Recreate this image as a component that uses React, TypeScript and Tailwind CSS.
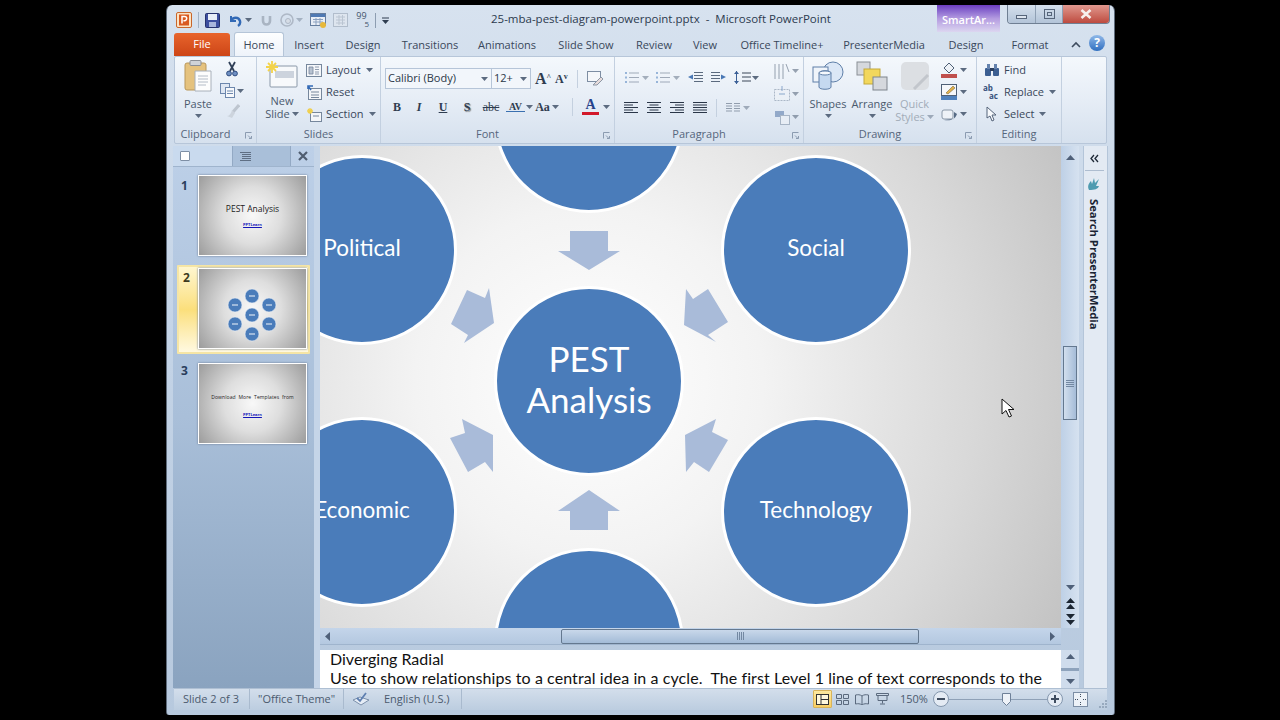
import type { ReactNode } from "react";

const uiFont = "font-['Open_Sans','Noto_Sans',sans-serif]";

const tabs = [
  { label: "Insert", w: "w-[50px]" },
  { label: "Design", w: "w-[58px]" },
  { label: "Transitions", w: "w-[76px]" },
  { label: "Animations", w: "w-[78px]" },
  { label: "Slide Show", w: "w-[80px]" },
  { label: "Review", w: "w-[56px]" },
  { label: "View", w: "w-[46px]" },
  { label: "Office Timeline+", w: "w-[108px]" },
  { label: "PresenterMedia", w: "w-[96px]" },
  { label: "Design", w: "w-[68px]" },
  { label: "Format", w: "w-[60px]" },
];

function Caret({ className = "" }: { className?: string }) {
  return (
    <svg width="7" height="4" viewBox="0 0 7 4" className={"shrink-0 " + className}>
      <path d="M0 0h7L3.5 4z" fill="#5c6b80" />
    </svg>
  );
}

function QuickAccess() {
  return (
    <div className="flex items-center h-full pl-[9px] pt-[3px] gap-[6px]">
      <svg width="16" height="16" viewBox="0 0 16 16">
        <rect x="0.5" y="0.5" width="15" height="15" rx="1.5" fill="#fbe3c4" stroke="#c9662a" />
        <rect x="3" y="2.5" width="10" height="11" fill="#d9591f" />
        <path d="M6 11.5v-7h2.6a2 2 0 0 1 0 4.2H7.4" stroke="#fff" strokeWidth="1.5" fill="none" />
      </svg>
      <div className="w-px h-[16px] bg-[#a3b3c6]" />
      <svg width="15" height="15" viewBox="0 0 15 15">
        <rect x="0.5" y="0.5" width="14" height="14" rx="1" fill="#3d4f9f" stroke="#27336e" />
        <rect x="3" y="1" width="9" height="6" fill="#e8eef8" />
        <rect x="4" y="9" width="7" height="5" fill="#a9b6dc" />
      </svg>
      <svg width="14" height="13" viewBox="0 0 14 13" className="ml-[2px]">
        <path d="M3 2v5h5" fill="none" stroke="#3269b5" strokeWidth="2" />
        <path d="M3.5 6.5C5 3 10.5 2.5 12 7c.5 2-.5 4-2 5" fill="none" stroke="#3269b5" strokeWidth="2.4" />
      </svg>
      <Caret className="-ml-[3px]" />
      <svg width="13" height="13" viewBox="0 0 13 13" className="ml-[2px]">
        <path d="M3 2v5a3.5 3.5 0 0 0 7 0V2" fill="none" stroke="#a9b4c2" strokeWidth="2.6" />
      </svg>
      <svg width="16" height="16" viewBox="0 0 16 16">
        <circle cx="8" cy="8" r="6" fill="none" stroke="#aeb8c6" strokeWidth="1.6" />
        <circle cx="9" cy="9" r="2.5" fill="#d6dde6" stroke="#aeb8c6" />
      </svg>
      <Caret className="-ml-[5px] opacity-40" />
      <svg width="16" height="15" viewBox="0 0 16 15" className="ml-[1px]">
        <rect x="0.5" y="0.5" width="15" height="12" fill="#e9eef6" stroke="#667e9f" />
        <rect x="1" y="1" width="14" height="3" fill="#4f79b3" />
        <path d="M3 6.5h10M3 9h10M6 5v7M10 5v7" stroke="#8ba1bf" />
        <circle cx="13" cy="12" r="3" fill="#e7b83a" />
      </svg>
      <svg width="15" height="14" viewBox="0 0 15 14" className="ml-[1px] opacity-60">
        <rect x="0.5" y="0.5" width="14" height="13" fill="#e3e8ef" stroke="#9aa6b5" />
        <path d="M3 4h9M3 7h9M3 10h9M6 2v10M9.500 2v10" stroke="#a9b3c0" />
      </svg>
      <div className="flex flex-col items-center leading-[8px] text-[9px] text-[#43546b] w-[15px]">
        <span>99</span>
        <span className="self-end text-[8px]">5</span>
      </div>
      <div className="w-px h-[15px] bg-[#8d9db1]" />
      <svg width="7" height="7" viewBox="0 0 7 7">
        <path d="M0 0.500h7v1H0zM0 3h7L3.500 7z" fill="#2f3d50" />
      </svg>
    </div>
  );
}

function WindowButtons() {
  return (
    <div className="flex h-[19px] self-start rounded-b-[4px] border border-t-0 border-[#6f7f93] overflow-hidden w-[103px] shrink-0 mr-[6px]">
      <div className="w-[28px] flex items-center justify-center bg-gradient-to-b from-[#d5e0ed] to-[#b3c4d8] border-r border-[#8fa0b4]">
        <div className="w-[11px] h-[4px] mt-[5px] bg-[#dde5ef] border border-[#56657a]" />
      </div>
      <div className="w-[27px] flex items-center justify-center bg-gradient-to-b from-[#d5e0ed] to-[#b3c4d8] border-r border-[#8fa0b4]">
        <div className="w-[11px] h-[10px] border border-[#56657a] flex items-center justify-center">
          <div className="w-[5px] h-[4px] border border-[#56657a]" />
        </div>
      </div>
      <div className="flex-1 flex items-center justify-center bg-gradient-to-b from-[#e0988f] to-[#bd4a3f]">
        <svg width="12" height="10" viewBox="0 0 12 10">
          <path d="M1.500 1l9 8M10.500 1l-9 8" stroke="#f6f1ef" strokeWidth="2.600" />
        </svg>
      </div>
    </div>
  );
}

function TitleBar() {
  return (
    <div className="flex h-[27px] shrink-0">
      <div className="w-[318px] shrink-0">
        <QuickAccess />
      </div>
      <div className="w-[452px] shrink-0 pt-[6px] pl-[6px] text-[11.5px] leading-[16px] text-[#2c3a4e] whitespace-nowrap">
        25-mba-pest-diagram-powerpoint.pptx&nbsp; -&nbsp; Microsoft PowerPoint
      </div>
      <div className="w-[63px] shrink-0 bg-gradient-to-b from-[#6d3cc0] via-[#b49be0] to-[#dcd6f0] pt-[7px] text-center text-[11px] leading-[16px] font-semibold text-white">
        SmartAr...
      </div>
      <div className="w-[7px] shrink-0" />
      <WindowButtons />
    </div>
  );
}

function TabRow() {
  return (
    <div className="flex h-[24px] shrink-0 items-stretch text-[11px] text-[#39475a] pl-[7px]">
      <div className="w-[56px] mt-[1px] rounded-t-[3px] bg-gradient-to-b from-[#e8642c] to-[#cd4516] text-white flex items-center justify-center">
        File
      </div>
      <div className="w-[50px] ml-[4px] pt-[1px] rounded-t-[3px] bg-gradient-to-b from-[#fdfeff] to-[#eef3fa] border border-b-0 border-[#b5c5d8] flex items-center justify-center">
        Home
      </div>
      {tabs.map((t, i) => (
        <div key={i} className={t.w + " pt-[2px] flex items-center justify-center whitespace-nowrap"}>
          {t.label}
        </div>
      ))}
      <div className="w-[15px] flex items-center justify-end ml-[6px]">
        <svg width="10" height="7" viewBox="0 0 10 7">
          <path d="M1 6l4-4 4 4" fill="none" stroke="#3e4c5f" strokeWidth="1.600" />
        </svg>
      </div>
      <div className="ml-[8px] mt-[3px] w-[16px] h-[16px] rounded-full bg-gradient-to-b from-[#8fb8e8] to-[#2f6fc0] text-white text-[12px] leading-[16px] font-bold text-center">
        ?
      </div>
    </div>
  );
}

function Group({ label, w, launcher, children }: { label: string; w: string; launcher?: boolean; children: ReactNode }) {
  return (
    <div className={w + " shrink-0 flex flex-col border-r border-[#c3d0e0] relative"}>
      <div className="h-[69px] flex">{children}</div>
      <div className={"h-[15px] text-center text-[11px] leading-[15px] text-[#56667c] " + (launcher ? "pr-[20px]" : "")}>{label}</div>
      {launcher && (
        <svg width="7" height="7" viewBox="0 0 7 7" className="absolute right-[4px] bottom-[4px]">
          <path d="M0.500 6.500v-6h6M3 3.500l3 3M4 6.500h2.500V4" fill="none" stroke="#8b9bb0" />
        </svg>
      )}
    </div>
  );
}

function SmallRow({ icon, label, caret }: { icon: ReactNode; label: string; caret?: boolean }) {
  return (
    <div className="h-[22px] flex items-center text-[11px] text-[#39475a] gap-[3px] whitespace-nowrap">
      <span className="w-[17px] h-[16px] flex items-center justify-center shrink-0">{icon}</span>
      <span className="ml-[1px]">{label}</span>
      {caret && <Caret className="ml-[2px]" />}
    </div>
  );
}

function Clipboard() {
  return (
    <div className="flex pl-[6px] pt-[3px]">
      <div className="w-[34px] flex flex-col items-center text-[11px] leading-[13px] text-[#4b5a6e]">
        <svg width="28" height="32" viewBox="0 0 28 32">
          <rect x="1" y="3" width="21" height="27" rx="2" fill="#e5c27e" stroke="#b9975a" />
          <rect x="6" y="0.500" width="11" height="5" rx="1" fill="#cfd3d8" stroke="#8a8f96" />
          <path d="M11 11h16v20H11z" fill="#fdfdfd" stroke="#a8b0ba" />
          <path d="M14 16h10M14 19h10M14 22h10M14 25h8" stroke="#b4bcc7" />
        </svg>
        <span className="mt-[5px]">Paste</span>
        <Caret className="mt-[4px]" />
      </div>
      <div className="ml-[6px] flex flex-col items-center pt-[1px] gap-[6px] w-[22px]">
        <svg width="14" height="16" viewBox="0 0 14 16">
          <path d="M4 1l5 9M10 1L5 10" stroke="#2f3f57" strokeWidth="1.800" />
          <circle cx="4" cy="12.500" r="2.400" fill="#6e8fc2" stroke="#2f4c80" />
          <circle cx="10" cy="12.500" r="2.400" fill="#6e8fc2" stroke="#2f4c80" />
        </svg>
        <div className="flex items-center gap-[2px]">
          <svg width="15" height="15" viewBox="0 0 15 15">
            <rect x="0.500" y="0.500" width="9" height="10" fill="#dfe7f3" stroke="#6d87ad" />
            <rect x="5.500" y="4.500" width="9" height="10" fill="#f7f9fc" stroke="#6d87ad" />
            <path d="M7 8h6M7 10.500h6" stroke="#6d87ad" />
          </svg>
          <Caret />
        </div>
        <svg width="15" height="15" viewBox="0 0 15 15" className="opacity-70">
          <path d="M14 1L8 8" stroke="#aeb6c0" strokeWidth="3" />
          <path d="M7 6l3 3-3 5-5-2c2 0 4-2 5-6z" fill="#c5ccd5" />
        </svg>
      </div>
    </div>
  );
}

function Slides() {
  return (
    <div className="flex pt-[3px]">
      <div className="w-[50px] flex flex-col items-center text-[11px] leading-[13px] text-[#4b5a6e]">
        <svg width="32" height="28" viewBox="0 0 32 28">
          <rect x="4" y="6" width="27" height="21" rx="1" fill="#f7f9fb" stroke="#8a98a8" />
          <rect x="9" y="11" width="19" height="7" fill="#ccd3dd" />
          <path d="M6 1v12M0 7h12M2 3l8 8M10 3l-8 8" stroke="#f3d34a" strokeWidth="1.800" />
        </svg>
        <span className="mt-[6px]">New</span>
        <span className="flex items-center gap-[2px]">
          Slide <Caret />
        </span>
      </div>
      <div className="-ml-[2px] flex flex-col -mt-[1px]">
        <SmallRow
          label="Layout"
          caret
          icon={
            <svg width="16" height="13" viewBox="0 0 16 13">
              <rect x="0.500" y="0.500" width="15" height="12" fill="#f4f6f9" stroke="#76879c" />
              <path d="M3 3h4v7H3zM9 3h4M9 5.500h4M9 8h4M9 10h4" fill="#b7c2d0" stroke="#76879c" strokeWidth="0.800" />
            </svg>
          }
        />
        <SmallRow
          label="Reset"
          icon={
            <svg width="16" height="15" viewBox="0 0 16 15">
              <rect x="2.500" y="3.500" width="13" height="11" fill="#f4f6f9" stroke="#76879c" />
              <path d="M5 7h8M5 10h8M5 12.500h8" stroke="#76879c" />
              <path d="M7 1H2v3M2 1l3 4" fill="none" stroke="#3269b5" strokeWidth="1.600" />
            </svg>
          }
        />
        <SmallRow
          label="Section"
          caret
          icon={
            <svg width="16" height="15" viewBox="0 0 16 15">
              <rect x="4.500" y="5.500" width="11" height="9" fill="#f4f6f9" stroke="#76879c" />
              <path d="M7 9h6" stroke="#76879c" />
              <path d="M4 1v6M1 4h6M2 2l4 4M6 2L2 6" stroke="#f0cf4c" strokeWidth="1.300" />
            </svg>
          }
        />
      </div>
    </div>
  );
}

function FontGroup() {
  return (
    <div className="flex flex-col pl-[4px] pt-[11px] w-full">
      <div className="flex items-center h-[21px]">
        <div className="w-[107px] h-[21px] bg-[#f2f6fb] border border-[#b6c5d8] flex items-center justify-between pl-[2px] pr-[3px] text-[11px] text-[#2b3848]">
          <span>Calibri (Body)</span>
          <Caret />
        </div>
        <div className="w-[39px] h-[21px] bg-[#f2f6fb] border border-l-0 border-[#b6c5d8] flex items-center justify-between pl-[2px] pr-[3px] text-[11px] text-[#2b3848]">
          <span>12+</span>
          <Caret />
        </div>
        <span className="ml-[4px] w-[20px] font-['Liberation_Serif',serif] font-bold text-[16px] text-[#2f3d50]">
          A<sup className="text-[8px]">^</sup>
        </span>
        <span className="w-[20px] font-['Liberation_Serif',serif] font-bold text-[12px] text-[#2f3d50]">
          A<sup className="text-[8px]">v</sup>
        </span>
        <div className="w-px h-[18px] bg-[#c4d0df] ml-[2px]" />
        <svg width="17" height="16" viewBox="0 0 17 16" className="ml-[9px]">
          <rect x="0.500" y="0.500" width="13" height="10" fill="#f5f7fa" stroke="#7e8ea3" />
          <path d="M6 14l8-8 2 2-6 6z" fill="#e7dcdc" stroke="#8d97a5" />
        </svg>
      </div>
      <div className="flex items-center h-[21px] mt-[7px] text-[#2f3d50] font-['Liberation_Serif',serif] text-[12px] font-bold">
        <span className="w-[12px] ml-[6px] text-center">B</span>
        <span className="w-[12px] ml-[10px] text-center italic">I</span>
        <span className="w-[12px] ml-[12px] text-center underline">U</span>
        <span className="w-[12px] ml-[12px] text-center [text-shadow:1px_1px_1px_#777]">S</span>
        <span className="w-[18px] ml-[9px] text-center line-through font-normal">abc</span>
        <span className="w-[19px] ml-[6px] text-center text-[10px] leading-[9px] border-b border-[#3a70b0]">AV</span>
        <Caret className="ml-[1px]" />
        <span className="w-[17px] ml-[1px] text-center">Aa</span>
        <Caret className="ml-[1px]" />
        <div className="w-px h-[18px] bg-[#c4d0df] ml-[13px]" />
        <span className="w-[17px] ml-[9px] text-center text-[14px] leading-[14px] text-[#26428b] border-b-[3px] border-[#d2182a]">A</span>
        <Caret className="ml-[4px]" />
      </div>
    </div>
  );
}

function ListIcon({ muted }: { muted?: boolean }) {
  return (
    <svg width="15" height="13" viewBox="0 0 15 13" className={muted ? "opacity-60" : ""}>
      <path d="M5 2h10M5 6.500h10M5 11h10" stroke="#6d7b8e" />
      <path d="M1 1h2v2H1zM1 5.500h2v2H1zM1 10h2v2H1z" fill="#5f8cc4" />
    </svg>
  );
}

function IndentIcon({ flip }: { flip?: boolean }) {
  return (
    <svg width="15" height="13" viewBox="0 0 15 13" className={flip ? "-scale-x-100" : ""}>
      <path d="M6 1.500h9M6 4.500h9M6 7.500h9M6 10.500h9" stroke="#5b6a7e" />
      <path d="M5 3.500v5L0 6z" fill="#4a78b5" />
    </svg>
  );
}

function AlignIcon({ kind }: { kind: "l" | "c" | "r" | "j" }) {
  const d = {
    l: "M0 1.500h14M0 4h9M0 6.500h14M0 9h9M0 11.500h14",
    c: "M0 1.500h14M2.500 4h9M0 6.500h14M2.500 9h9M0 11.500h14",
    r: "M0 1.500h14M5 4h9M0 6.500h14M5 9h9M0 11.500h14",
    j: "M0 1.500h14M0 4h14M0 6.500h14M0 9h14M0 11.500h14",
  }[kind];
  return (
    <svg width="14" height="13" viewBox="0 0 14 13">
      <path d={d} stroke="#2a3648" />
    </svg>
  );
}

function Paragraph() {
  return (
    <div className="flex w-full pl-[9px] pt-[5px]">
      <div className="flex flex-col w-[150px] pt-[5px]">
        <div className="flex items-center h-[21px]">
          <ListIcon muted />
          <Caret className="ml-[3px] opacity-50" />
          <span className="w-[6px]" />
          <ListIcon muted />
          <Caret className="ml-[3px] opacity-50" />
          <span className="w-[8px]" />
          <IndentIcon />
          <span className="w-[8px]" />
          <IndentIcon flip />
          <span className="w-[8px]" />
          <svg width="17" height="15" viewBox="0 0 17 15">
            <path d="M2.500 1v13" stroke="#3a5f96" />
            <path d="M0 4l2.500-3L5 4zM0 11l2.500 3L5 11z" fill="#3a5f96" />
            <path d="M8 3h9M8 7h9M8 11h9" stroke="#3a4658" />
          </svg>
          <Caret className="ml-[1px]" />
        </div>
        <div className="flex items-center h-[21px] mt-[9px] gap-[9px]">
          <AlignIcon kind="l" />
          <AlignIcon kind="c" />
          <AlignIcon kind="r" />
          <AlignIcon kind="j" />
          <div className="w-px h-[18px] bg-[#c4d0df]" />
          <svg width="14" height="12" viewBox="0 0 14 12" className="opacity-60">
            <path d="M0 1.500h6M0 4h6M0 6.500h6M0 9h6M8 1.500h6M8 4h6M8 6.500h6M8 9h6" stroke="#5b6a7e" />
          </svg>
          <Caret className="-ml-[6px] opacity-50" />
        </div>
      </div>
      <div className="flex flex-col gap-[5px] opacity-60">
        <div className="flex items-center gap-[2px] h-[18px]">
          <svg width="16" height="17" viewBox="0 0 16 17">
            <path d="M1 1v15M5 1v15M9 1v15" stroke="#5b6a7e" />
            <path d="M12 1l3 8" stroke="#5b6a7e" />
          </svg>
          <Caret />
        </div>
        <div className="flex items-center gap-[2px] h-[18px]">
          <svg width="16" height="16" viewBox="0 0 16 16">
            <rect x="0.500" y="3.500" width="15" height="11" fill="#eef2f7" stroke="#8494a8" strokeDasharray="2 1" />
            <path d="M8 0v5M5 8h6" stroke="#4d78b0" />
          </svg>
          <Caret />
        </div>
        <div className="flex items-center gap-[2px] h-[18px]">
          <svg width="16" height="16" viewBox="0 0 16 16">
            <path d="M1 2h9v6H1z" fill="#5f7fae" />
            <rect x="6.500" y="6.500" width="9" height="9" fill="#eef2f7" stroke="#8494a8" />
          </svg>
          <Caret />
        </div>
      </div>
    </div>
  );
}

function Drawing() {
  return (
    <div className="flex w-full pl-[2px] pt-[4px] text-[11px] leading-[13px] text-[#4b5a6e]">
      <div className="w-[44px] flex flex-col items-center">
        <svg width="32" height="30" viewBox="0 0 32 30">
          <circle cx="21" cy="11" r="10" fill="#dbe7f6" stroke="#5f7fa8" />
          <rect x="1" y="6" width="15" height="15" fill="#eff4fa" stroke="#5f7fa8" />
          <path d="M7 12c0-3 12-3 12 0v14c0 3-12 3-12 0z" fill="#c5d9f0" stroke="#5f7fa8" />
          <ellipse cx="13" cy="12" rx="6" ry="2" fill="#f5f9fd" stroke="#5f7fa8" />
        </svg>
        <span className="mt-[6px]">Shapes</span>
        <Caret className="mt-[4px]" />
      </div>
      <div className="w-[44px] flex flex-col items-center">
        <svg width="32" height="30" viewBox="0 0 32 30">
          <rect x="1" y="1" width="13" height="13" fill="#d5d8dd" stroke="#8a8f96" />
          <rect x="8" y="8" width="16" height="15" fill="#f2d75c" stroke="#c4a93a" />
          <rect x="17" y="16" width="14" height="13" fill="#d5d8dd" stroke="#7f858d" />
        </svg>
        <span className="mt-[6px]">Arrange</span>
        <Caret className="mt-[4px]" />
      </div>
      <div className="w-[41px] flex flex-col items-center text-[#a2acb8]">
        <svg width="30" height="30" viewBox="0 0 30 30">
          <rect x="1" y="1" width="28" height="28" rx="5" fill="#dcdfe3" />
          <path d="M28 14L14 28" stroke="#c2c6cc" strokeWidth="3" />
        </svg>
        <span className="mt-[6px]">Quick</span>
        <span className="flex items-center gap-[2px]">
          Styles <Caret className="opacity-50" />
        </span>
      </div>
      <div className="ml-[6px] flex flex-col gap-[6px] pt-[1px]">
        <div className="flex items-center gap-[3px] h-[16px]">
          <svg width="16" height="16" viewBox="0 0 16 16">
            <path d="M3 6l5-5 5 5-5 5z" fill="#eef2f7" stroke="#4f6076" />
            <rect x="0" y="12" width="16" height="4" fill="#c0504d" />
          </svg>
          <Caret />
        </div>
        <div className="flex items-center gap-[3px] h-[16px]">
          <svg width="16" height="16" viewBox="0 0 16 16">
            <rect x="0.500" y="0.500" width="15" height="11" fill="#f5f7fa" stroke="#4f6076" />
            <path d="M5 9l7-7 2 2-7 6z" fill="#e0b04a" stroke="#6a5a30" strokeWidth="0.500" />
            <rect x="0" y="12" width="16" height="4" fill="#4f81bd" />
          </svg>
          <Caret />
        </div>
        <div className="flex items-center gap-[3px] h-[16px]">
          <svg width="16" height="14" viewBox="0 0 16 14">
            <rect x="1" y="3" width="11" height="9" rx="2" fill="#eef2f7" stroke="#8a98a8" />
            <path d="M3 13c6 1 11 0 13-6l-3-2v7z" fill="#566a84" />
          </svg>
          <Caret />
        </div>
      </div>
    </div>
  );
}

function Editing() {
  return (
    <div className="flex flex-col pl-[6px] pt-[2px]">
      <SmallRow
        label="Find"
        icon={
          <svg width="16" height="14" viewBox="0 0 16 14">
            <rect x="1" y="5" width="6" height="8" rx="1" fill="#3c5f92" />
            <rect x="9" y="5" width="6" height="8" rx="1" fill="#3c5f92" />
            <rect x="3" y="1" width="3" height="5" fill="#6583ae" />
            <rect x="10" y="1" width="3" height="5" fill="#6583ae" />
            <rect x="6" y="5" width="4" height="3" fill="#2b3f5f" />
          </svg>
        }
      />
      <SmallRow
        label="Replace"
        caret
        icon={
          <svg width="17" height="16" viewBox="0 0 17 16" fontSize="8" fontWeight="700" fill="#37527c">
            <text x="0" y="7">ab</text>
            <text x="6" y="15">ac</text>
          </svg>
        }
      />
      <SmallRow
        label="Select"
        caret
        icon={
          <svg width="14" height="16" viewBox="0 0 14 16">
            <path d="M2 1v11l3-2 2 5 2-1-2-5h4z" fill="#f7f9fc" stroke="#55647a" />
          </svg>
        }
      />
    </div>
  );
}

function Ribbon() {
  return (
    <div className="h-[88px] shrink-0 mx-[7px] flex bg-gradient-to-b from-[#f4f8fc] via-[#e6edf6] to-[#d6e1ee] border border-[#b7c6d9] rounded-[2px]">
      <Group label="Clipboard" w="w-[82px]" launcher>
        <Clipboard />
      </Group>
      <Group label="Slides" w="w-[124px]">
        <Slides />
      </Group>
      <Group label="Font" w="w-[234px]" launcher>
        <FontGroup />
      </Group>
      <Group label="Paragraph" w="w-[189px]" launcher>
        <Paragraph />
      </Group>
      <Group label="Drawing" w="w-[173px]" launcher>
        <Drawing />
      </Group>
      <Group label="Editing" w="w-[85px]">
        <Editing />
      </Group>
    </div>
  );
}

function Thumb({ children }: { children: ReactNode }) {
  return (
    <div className="w-[109px] h-[81px] border border-white shadow-[0_0_2px_#67788f] bg-[radial-gradient(circle_68px_at_50%_50%,#f8f8f8_0%,#dedede_42%,#999999_100%)] flex flex-col items-center justify-center shrink-0">
      {children}
    </div>
  );
}

function MiniDiagram() {
  const spots = [
    [53, 27],
    [36, 36],
    [70, 36],
    [53, 46],
    [36, 55],
    [70, 55],
    [53, 65],
  ];
  return (
    <svg width="107" height="79" viewBox="0 0 107 79">
      {spots.map(([x, y], i) => (
        <g key={i}>
          <circle cx={x} cy={y} r="7" fill="#4a7cba" stroke="#e9eef5" strokeWidth="0.600" />
          <path d={`M${x - 3} ${y}h6`} stroke="#f2f6fb" />
        </g>
      ))}
    </svg>
  );
}

function SlideLink() {
  return <span className="text-[4px] leading-[6px] text-[#1414b8] underline font-bold">PPTLearn</span>;
}

function ThumbPane() {
  return (
    <div className="w-[141px] shrink-0 flex flex-col bg-gradient-to-b from-[#bdd0e8] via-[#a9bfd9] to-[#8aa3bf]">
      <div className="flex h-[21px] shrink-0 border-b border-[#9fb4cd]">
        <div className="w-[59px] bg-[#c9daee] pl-[7px] pt-[5px]">
          <div className="w-[10px] h-[10px] rounded-[1px] bg-white border border-[#7e8fa5]" />
        </div>
        <div className="w-[59px] bg-[#a9bfd9] border-x border-[#93a9c4] flex items-center pl-[7px]">
          <svg width="11" height="9" viewBox="0 0 11 9">
            <path d="M0 .500h11M2 2.500h9M2 4.500h9M2 6.500h9M0 8.500h11" stroke="#5f6f84" />
          </svg>
        </div>
        <div className="flex-1 flex items-center justify-center">
          <svg width="10" height="10" viewBox="0 0 10 10">
            <path d="M1 1l8 8M9 1l-8 8" stroke="#4f5d70" strokeWidth="2.200" />
          </svg>
        </div>
      </div>
      <div className="flex pl-[25px] pt-[8px] relative">
        <span className="absolute left-[8px] top-[10px] text-[12px] font-bold text-[#2a3e5c]">1</span>
        <Thumb>
          <span className="text-[8.500px] leading-[12px] text-[#222]">PEST Analysis</span>
          <div className="mt-[2px] leading-[6px]">
            <SlideLink />
          </div>
        </Thumb>
      </div>
      <div className="mt-[9px] mx-[4px] h-[89px] flex items-start pt-[1px] pl-[19px] relative rounded-[1px] border-2 border-[#f5e5a5] bg-gradient-to-b from-[#fff6cf] via-[#fbdf7b] to-[#fff9e0]">
        <span className="absolute left-[4px] top-[2px] text-[12px] font-bold text-[#3d3a20]">2</span>
        <Thumb>
          <MiniDiagram />
        </Thumb>
      </div>
      <div className="flex pl-[25px] pt-[9px] relative">
        <span className="absolute left-[8px] top-[8px] text-[12px] font-bold text-[#2a3e5c]">3</span>
        <Thumb>
          <span className="text-[5px] leading-[8px] text-[#222] mt-[3px] whitespace-nowrap tracking-[0.1px]">Download&nbsp; More&nbsp; Templates&nbsp; from</span>
          <div className="mt-[6px] leading-[6px]">
            <SlideLink />
          </div>
        </Thumb>
      </div>
    </div>
  );
}

function Node({ pos, children, big }: { pos: string; children?: ReactNode; big?: boolean }) {
  return (
    <div
      className={
        pos +
        " absolute w-[190px] h-[190px] rounded-full bg-[#4a7cba] border-[3px] border-white flex items-center justify-center text-center text-white pb-[4px] font-['Lato','Noto_Sans',sans-serif] " +
        (big ? "text-[35px] leading-[41px]" : "text-[22.500px] leading-[28px]")
      }
    >
      {children}
    </div>
  );
}

function Canvas() {
  return (
    <div className="relative flex-1 overflow-hidden bg-[radial-gradient(circle_580px_at_269px_235px,#ffffff_0%,#f3f3f3_30%,#d9d9d9_66%,#bcbcbc_100%)]">
      <Node pos="left-[174px] -top-[123px]" />
      <Node pos="-left-[53px] top-[9px]">Political</Node>
      <Node pos="left-[401px] top-[9px]">Social</Node>
      <Node pos="left-[174px] top-[140px]" big>
        <span>
          PEST
          <br />
          Analysis
        </span>
      </Node>
      <Node pos="-left-[53px] top-[271px]">Economic</Node>
      <Node pos="left-[401px] top-[271px]">Technology</Node>
      <Node pos="left-[174px] top-[402px]" />
      <svg className="absolute inset-0" width="741" height="482" viewBox="320 146 741 482">
        <g fill="#a9bbd9">
          <polygon points="570,231 608,231 608,251 620,251 589,270 558,251 570,251" />
          <polygon points="589,490 620,511 608,511 608,530 570,530 570,511 558,511" />
          <polygon points="467,290 485,298 489,288 494,323 464,343 468,335 451,324" />
          <polygon points="686,289 693,299 708,289 728,322 708,335 716,342 684,325" />
          <polygon points="462,419 493,435 493,472 485,462 468,472 450,438 465,433" />
          <polygon points="716,419 685,435 686,472 694,462 709,472 728,440 712,432" />
        </g>
      </svg>
      <svg className="absolute left-[681px] top-[252px]" width="14" height="20" viewBox="0 0 14 20">
        <path d="M1 1v15l4-3.500 3 6.500 2.500-1-3-6.500H13z" fill="#fff" stroke="#111" />
      </svg>
    </div>
  );
}

function VScroll() {
  return (
    <div className="w-[18px] shrink-0 flex flex-col items-center bg-gradient-to-r from-[#bed0e6] to-[#d6e2f0] pt-[9px]">
      <svg width="9" height="5" viewBox="0 0 9 5">
        <path d="M0 5l4.500-5L9 5z" fill="#4f6079" />
      </svg>
      <div className="mt-[186px] w-[14px] h-[74px] bg-gradient-to-r from-[#d2dfee] to-[#a5bcd8] border border-[#64788f] flex items-center justify-center">
        <svg width="8" height="7" viewBox="0 0 8 7">
          <path d="M0 .500h8M0 2.500h8M0 4.500h8M0 6.500h8" stroke="#7388a2" />
        </svg>
      </div>
      <svg width="9" height="5" viewBox="0 0 9 5" className="mt-[165px]">
        <path d="M0 0l4.500 5L9 0z" fill="#4f6079" />
      </svg>
      <svg width="9" height="11" viewBox="0 0 9 11" className="mt-[8px]">
        <path d="M0 5l4.500-5L9 5zM0 11l4.500-5L9 11z" fill="#1d2733" />
      </svg>
      <svg width="9" height="11" viewBox="0 0 9 11" className="mt-[5px]">
        <path d="M0 0l4.500 5L9 0zM0 6l4.500 5L9 6z" fill="#1d2733" />
      </svg>
    </div>
  );
}

function HScroll() {
  return (
    <div className="h-[17px] shrink-0 flex items-center bg-gradient-to-b from-[#c4d5ea] to-[#b4c8e0] border-b border-[#9fb4cd] relative pl-[5px]">
      <svg width="5" height="9" viewBox="0 0 5 9">
        <path d="M5 0L0 4.500 5 9z" fill="#4f6079" />
      </svg>
      <div className="ml-[231px] w-[358px] h-[15px] rounded-[2px] bg-gradient-to-b from-[#c9d8ea] to-[#a3bbd7] border border-[#64788f] flex items-center justify-center">
        <svg width="7" height="8" viewBox="0 0 7 8">
          <path d="M.500 0v8M2.500 0v8M4.500 0v8M6.500 0v8" stroke="#7388a2" />
        </svg>
      </div>
      <svg width="5" height="9" viewBox="0 0 5 9" className="ml-[131px]">
        <path d="M0 0l5 4.500L0 9z" fill="#4f6079" />
      </svg>
    </div>
  );
}

function Notes() {
  return (
    <div className="h-[38px] mt-[5px] flex shrink-0 w-[759px]">
      <div className="w-[741px] bg-white pl-[10px] overflow-hidden font-['Lato','Noto_Sans',sans-serif] text-[16px] leading-[19px] text-[#111] whitespace-nowrap">
        <div className="-mt-[1px]">Diverging Radial</div>
        <div className="tracking-[0.08px]">Use to show relationships to a central idea in a cycle.&nbsp; The first Level 1 line of text corresponds to the</div>
      </div>
      <div className="flex-1 bg-[#cfdcec] flex flex-col items-center justify-between py-[4px]">
        <svg width="9" height="5" viewBox="0 0 9 5">
          <path d="M0 5l4.500-5L9 5z" fill="#4f6079" />
        </svg>
        <div className="w-full h-[3px] bg-[#8ea3bc]" />
        <svg width="9" height="5" viewBox="0 0 9 5">
          <path d="M0 0l4.500 5L9 0z" fill="#4f6079" />
        </svg>
      </div>
    </div>
  );
}

function SidePanel() {
  return (
    <div className="w-[25px] ml-[4px] pr-[3px] shrink-0 bg-[#e3eaf3] border-x border-[#b4c5d9] flex flex-col items-center">
      <svg width="9" height="9" viewBox="0 0 9 9" className="mt-[8px]">
        <path d="M4 1L1 4.500 4 8M8 1L5 4.500 8 8" fill="none" stroke="#1f2a38" strokeWidth="1.300" />
      </svg>
      <div className="w-[19px] h-px bg-[#aebdd0] mt-[7px]" />
      <svg width="14" height="16" viewBox="0 0 14 16" className="mt-[4px]">
        <path d="M2 15c-2-4 0-7 2-9l1 3 2-6 1 5 4-4-3 7 3 0c-1 3-4 4-10 4z" fill="#4f9bb0" />
      </svg>
      <div className="mt-[8px] [writing-mode:vertical-rl] text-[11.250px] leading-[12px] font-bold text-[#1a2433] whitespace-nowrap">
        Search PresenterMedia
      </div>
    </div>
  );
}

function StatusBar() {
  return (
    <div className="h-[22px] shrink-0 mx-[7px] pb-[1px] flex items-center bg-gradient-to-b from-[#d3deeb] to-[#bccde0] text-[11px] text-[#4b5a6e] border-t border-[#aebfd3]">
      <div className="w-[76px] pl-[9px] h-full flex items-center border-r border-[#a9bace] whitespace-nowrap">Slide 2 of 3</div>
      <div className="w-[94px] pl-[8px] h-full flex items-center border-r border-[#a9bace] whitespace-nowrap">"Office Theme"</div>
      <div className="w-[118px] pl-[8px] h-full flex items-center border-r border-[#a9bace] whitespace-nowrap">
        <svg width="18" height="14" viewBox="0 0 18 14">
          <path d="M1 8l7-3 9 3-8 5z" fill="#e6edf6" stroke="#7c90ab" />
          <path d="M5 6l3 3 6-8" fill="none" stroke="#5e7fb0" strokeWidth="1.800" />
        </svg>
        <span className="ml-[14px]">English (U.S.)</span>
      </div>
      <div className="ml-[351px] flex items-center">
        <div className="w-[19px] h-[18px] bg-gradient-to-b from-[#fde9a0] to-[#f8ce62] border border-[#d9b45a] rounded-[1px] flex items-center justify-center">
          <svg width="13" height="11" viewBox="0 0 13 11">
            <rect x="0.500" y="0.500" width="12" height="10" fill="#fff8dc" stroke="#333" />
            <path d="M5 1v9M5 5.500h7" stroke="#333" />
          </svg>
        </div>
        <svg width="13" height="11" viewBox="0 0 13 11" className="ml-[4px]">
          <path d="M.500 .500h5v4h-5zM7.500 .500h5v4h-5zM.500 6.500h5v4h-5zM7.500 6.500h5v4h-5z" fill="none" stroke="#5b6a7e" />
        </svg>
        <svg width="14" height="11" viewBox="0 0 14 11" className="ml-[6px]">
          <path d="M7 2C5 .500 3 .500 .500 1v9c2.500-.500 4.500-.500 6.500 1 2-1.500 4-1.500 6.500-1V1C11 .500 9 .500 7 2zM7 2v9" fill="none" stroke="#5b6a7e" />
        </svg>
        <svg width="13" height="12" viewBox="0 0 13 12" className="ml-[7px]">
          <path d="M.500 .500h12v2h-12zM2 2.500h9v5H2zM6.500 7.500v3M4 11h5" fill="none" stroke="#5b6a7e" />
        </svg>
        <span className="ml-[11px] w-[33px] whitespace-nowrap">150%</span>
        <div className="w-[16px] h-[16px] rounded-full border border-[#8497ae] bg-[#e4ebf4] flex items-center justify-center">
          <div className="w-[8px] h-[2px] bg-[#3f4d60]" />
        </div>
        <div className="relative w-[98px] h-px bg-[#8fa1b7]">
          <svg width="9" height="13" viewBox="0 0 9 13" className="absolute left-[53px] -top-[6px]">
            <path d="M.500 .500h8v8L4.500 12.500 .500 8.500z" fill="#eef2f8" stroke="#6e8098" />
          </svg>
        </div>
        <div className="w-[16px] h-[16px] rounded-full border border-[#8497ae] bg-[#e4ebf4] flex items-center justify-center relative">
          <div className="w-[8px] h-[2px] bg-[#3f4d60]" />
          <div className="absolute w-[2px] h-[8px] bg-[#3f4d60]" />
        </div>
        <div className="ml-[10px] w-[15px] h-[15px] border border-[#7c8ea5] bg-[#edf2f8] flex items-center justify-center">
          <svg width="11" height="11" viewBox="0 0 11 11">
            <path d="M5.500 0v3M5.500 8v3M0 5.500h3M8 5.500h3" stroke="#3f4d60" strokeDasharray="1 1" />
          </svg>
        </div>
        <svg width="9" height="9" viewBox="0 0 9 9" className="ml-[10px] mt-[8px]">
          <path d="M7 1h2v2H7zM4 4h2v2H4zM7 4h2v2H7zM1 7h2v2H1zM4 7h2v2H4zM7 7h2v2H7z" fill="#97a9be" />
        </svg>
      </div>
    </div>
  );
}

export default function App() {
  return (
    <div className="h-[720px] w-[1280px] bg-black overflow-hidden pl-[166px] pt-[5px]">
      <div className={uiFont + " w-[949px] h-[710px] flex flex-col rounded-t-[6px] rounded-b-[3px] bg-gradient-to-b from-[#d7e2ef] via-[#c3d3e6] to-[#b7c9de] border-x border-[#5f6c7c]"}>
        <TitleBar />
        <TabRow />
        <Ribbon />
        <div className="flex h-[544px] mx-[6px] pt-[2px] shrink-0">
          <ThumbPane />
          <div className="w-[6px] shrink-0 bg-[#c5d5e8]" />
          <div className="flex flex-col w-[759px] shrink-0">
            <div className="flex h-[482px] shrink-0">
              <Canvas />
              <VScroll />
            </div>
            <div className="w-[741px]">
              <HScroll />
            </div>
            <Notes />
          </div>
          <SidePanel />
        </div>
        <StatusBar />
      </div>
    </div>
  );
}
